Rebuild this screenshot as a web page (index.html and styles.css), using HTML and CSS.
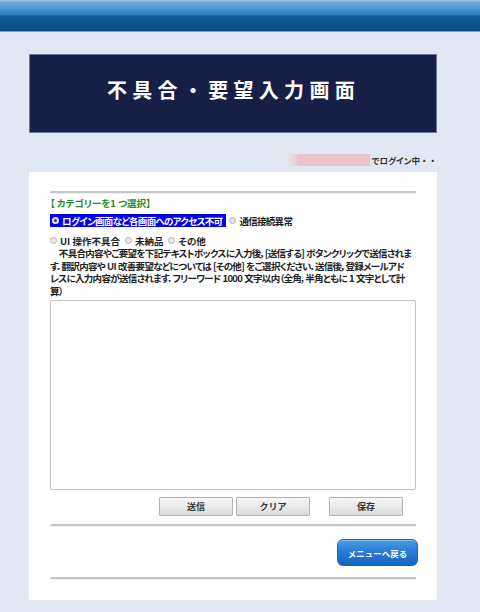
FILE: index.html
```html
<!DOCTYPE html>
<html lang="ja">
<head>
<meta charset="utf-8">
<title>不具合・要望入力画面</title>
<link rel="stylesheet" href="styles.css">
</head>
<body>
<div class="topbar"></div>
<div class="wrap">
  <div class="banner"><h1 class="title">不具合・要望入力画面</h1></div>
  <div class="login"><span class="masked"></span><span class="login-text">でログイン中<span class="dots">・・</span></span></div>
  <div class="card">
    <div class="rule"></div>
    <div class="cat-label">【 カテゴリーを1 つ選択】</div>
    <div class="radio-row radio-row-1">
      <label class="opt opt-selected"><span class="radio radio-on"></span>ログイン画面など各画面へのアクセス不可</label>
      <label class="opt"><span class="radio"></span>通信接続異常</label>
    </div>
    <div class="radio-row radio-row-2">
      <label class="opt"><span class="radio"></span>UI 操作不具合</label>
      <label class="opt"><span class="radio"></span>未納品</label>
      <label class="opt"><span class="radio"></span>その他</label>
    </div>
    <p class="note">　不具合内容やご要望を下記テキストボックスに入力後，[送信する] ボタンクリックで送信されま<br>す．翻訳内容や UI 改善要望などについては [その他] をご選択ください．送信後，登録メールアド<br>レスに入力内容が送信されます．フリーワード 1000 文字以内（全角，半角ともに 1 文字として計<br>算）</p>
    <textarea class="input"></textarea>
    <div class="btn-row">
      <button class="btn">送信</button>
      <button class="btn">クリア</button>
      <button class="btn btn-save">保存</button>
    </div>
    <div class="rule rule-mid"></div>
    <div class="menu-row"><button class="menu-btn">メニューへ戻る</button></div>
    <div class="rule rule-bottom"></div>
  </div>
</div>
</body>
</html>
```

FILE: styles.css
```css
* { box-sizing: border-box; }
html, body { margin: 0; padding: 0; }
body {
  background: #e1e8f3;
  font-family: "Noto Sans CJK JP", "Liberation Sans", sans-serif;
  color: #1e1e1e;
  width: 480px;
  height: 612px;
  overflow: hidden;
}
.topbar {
  height: 32px;
  background: linear-gradient(#a6c9e8 0, #72addf 2px, #4d95d0 9px, #2c7cbd 15px, #0c5d97 16px, #0a5288 24px, #0a4a7c 31px);
  border-bottom: 1px solid #8c9db2;
}
.wrap {
  width: 408px;
  margin-left: 29px;
}
.banner {
  margin-top: 22px;
  height: 79px;
  background: #181f47;
  border: 1px solid #6d7696;
  display: flex;
  align-items: center;
  justify-content: center;
  padding-bottom: 8px;
}
.title {
  margin: 0;
  color: #ffffff;
  font-size: 20px;
  font-weight: bold;
  letter-spacing: 5.3px;
  padding-left: 1px;
  line-height: 24px;
}
.login {
  margin-top: 20px;
  height: 14px;
  display: flex;
  justify-content: flex-end;
  align-items: center;
  padding-right: 0;
  font-size: 8.5px;
  font-weight: bold;
  color: #333;
  font-feature-settings: "palt";
}
.masked {
  width: 84px;
  height: 12px;
  margin-right: 2px;
  background: linear-gradient(90deg, rgba(234,196,204,0) 0, #eac4cc 14px, #eac4cc 100%);
}
.login-text { line-height: 14px; }
.dots { font-feature-settings: normal; }
.card {
  margin-top: 5px;
  height: 428px;
  background: #ffffff;
  padding: 19px 21px 0 21px;
}
.rule {
  height: 3px;
  border-top: 2px solid #c6c6c6;
  border-bottom: 1px solid #eeeeee;
  border-radius: 2px 0 0 2px;
}
.cat-label {
  margin-top: 3px;
  height: 12px;
  line-height: 12px;
  font-size: 9.5px;
  font-weight: bold;
  color: #2a8a2a;
  font-feature-settings: "palt";
}
.radio-row {
  margin-top: 5px;
  height: 13px;
  display: flex;
  align-items: center;
  font-size: 9.5px;
  font-weight: bold;
  font-feature-settings: "palt";
}
.radio-row-1 { letter-spacing: -0.7px; }
.radio-row-2 { margin-top: 7px; }
.opt {
  display: flex;
  align-items: center;
  height: 13px;
  margin-right: 5px;
  white-space: nowrap;
}
.opt-selected {
  background: #0000f8;
  color: #ffffff;
  padding: 0 4px 0 2px;
  margin-right: 3px;
}
.radio {
  width: 7px;
  height: 7px;
  border-radius: 50%;
  border: 1px solid #b4b4b4;
  background: #e9e9e9;
  margin-right: 3px;
  flex: none;
}
.radio-on {
  border: 2px solid #e6e6e6;
  background: #3a3a3a;
}
.note {
  margin: 0;
  font-size: 9.5px;
  line-height: 12.5px;
  font-weight: bold;
  color: #222;
  letter-spacing: -0.68px;
  word-spacing: 0.5px;
  font-feature-settings: "palt";
}
.input {
  display: block;
  margin-top: 3px;
  width: 366px;
  height: 190px;
  border: 1px solid #c4c4c4;
  border-radius: 2px;
  background: #fff;
  resize: none;
  padding: 0;
}
.btn-row {
  margin-top: 7px;
  height: 19px;
  display: flex;
  padding-left: 109px;
  gap: 3px;
}
.btn {
  width: 74px;
  height: 19px;
  padding: 0;
  border: 1px solid #b2b2b2;
  border-radius: 1px;
  background: linear-gradient(#f6f6f6, #dcdcdc);
  font-family: "Noto Sans CJK JP", sans-serif;
  font-size: 9px;
  color: #333;
  font-weight: bold;
}
.btn-save { margin-left: 16px; }
.rule-mid { margin-top: 8px; }
.menu-row {
  margin-top: 12px;
  height: 27px;
  display: flex;
  justify-content: flex-end;
  margin-right: -2px;
}
.menu-btn {
  width: 81px;
  height: 27px;
  padding: 0;
  border: 1px solid #1f62b3;
  border-radius: 6px;
  background: linear-gradient(#4a9be6, #2a7dd6 45%, #1263c4);
  box-shadow: inset 0 1px 0 rgba(255,255,255,0.35);
  color: #ffffff;
  font-family: "Noto Sans CJK JP", sans-serif;
  font-size: 8.5px;
  font-weight: bold;
}
.rule-bottom { margin-top: 11px; }
```
